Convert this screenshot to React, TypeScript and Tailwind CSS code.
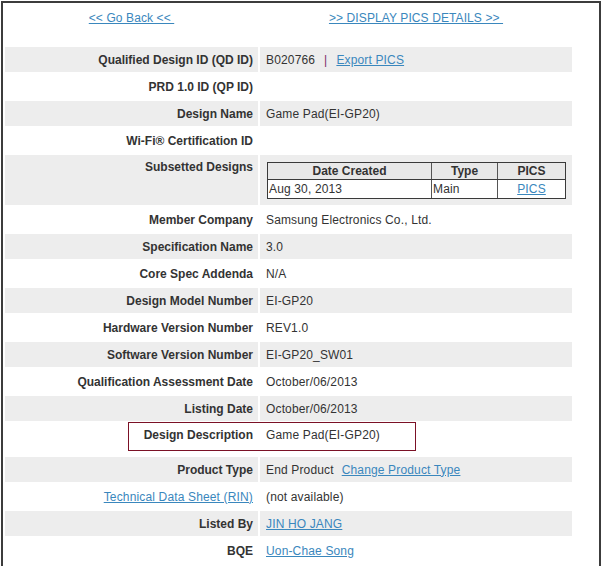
import type { ReactNode } from "react";

const linkCls = "text-[#3a87bd] underline underline-offset-[1px]";

type Row = {
  label: ReactNode;
  value?: ReactNode;
  gray: boolean;
  kind?: "subset" | "desc";
};

function SubsetTable() {
  return (
    <div className="w-[299px] border border-[#3a3a3a] bg-white text-[12px] leading-[14px] text-[#333]">
      <div className="grid h-[17px] grid-cols-[163px_66px_68px] border-b border-[#3a3a3a] bg-[#e8e8e8] font-bold">
        <div className="flex items-center justify-center">Date Created</div>
        <div className="flex items-center justify-center border-l border-[#555]">Type</div>
        <div className="flex items-center justify-center border-l border-[#555]">PICS</div>
      </div>
      <div className="grid h-[18px] grid-cols-[163px_66px_68px] tracking-[0.15px]">
        <div className="flex items-center pl-[1px]">Aug 30, 2013</div>
        <div className="flex items-center border-l border-[#555] pl-[1px]">Main</div>
        <div className="flex items-center justify-center border-l border-[#555]">
          <a className={linkCls}>PICS</a>
        </div>
      </div>
    </div>
  );
}

export default function App() {
  const rows: Row[] = [
    {
      label: "Qualified Design ID (QD ID)",
      value: (
        <>
          B020766
          <span className="mx-[9px] text-[#7b2d6b]">|</span>
          <a className={linkCls}>Export PICS</a>
        </>
      ),
      gray: true,
    },
    { label: "PRD 1.0 ID (QP ID)", gray: false },
    { label: "Design Name", value: "Game Pad(EI-GP20)", gray: true },
    { label: "Wi-Fi® Certification ID", gray: false },
    { label: "Subsetted Designs", gray: true, kind: "subset" },
    { label: "Member Company", value: "Samsung Electronics Co., Ltd.", gray: false },
    { label: "Specification Name", value: "3.0", gray: true },
    { label: "Core Spec Addenda", value: "N/A", gray: false },
    { label: "Design Model Number", value: "EI-GP20", gray: true },
    { label: "Hardware Version Number", value: "REV1.0", gray: false },
    { label: "Software Version Number", value: "EI-GP20_SW01", gray: true },
    { label: "Qualification Assessment Date", value: "October/06/2013", gray: false },
    { label: "Listing Date", value: "October/06/2013", gray: true },
    { label: "Design Description", value: "Game Pad(EI-GP20)", gray: false, kind: "desc" },
    {
      label: "Product Type",
      value: (
        <>
          End Product
          <a className={`${linkCls} ml-[8px]`}>Change Product Type</a>
        </>
      ),
      gray: true,
    },
    {
      label: (
        <a className={`${linkCls} font-normal tracking-[0.15px]`}>Technical Data Sheet (RIN)</a>
      ),
      value: "(not available)",
      gray: false,
    },
    { label: "Listed By", value: <a className={linkCls}>JIN HO JANG</a>, gray: true },
    { label: "BQE", value: <a className={linkCls}>Uon-Chae Song</a>, gray: false },
  ];

  return (
    <div
      className="relative h-[566px] w-[604px] overflow-hidden bg-white text-[12px] leading-[14px] text-[#333]"
      style={{ fontFamily: '"Liberation Sans", Arial, sans-serif' }}
    >
      <div className="ml-[1px] mt-[1px] h-[600px] w-[600px] border-l-2 border-r-2 border-t-2 border-[#3c3c3c]">
        <div className="flex h-[42px] gap-[2px] pl-[2px] tracking-[0.1px]">
          <div className="flex w-[253px] justify-center pt-[8px]">
            <a className={linkCls}>&lt;&lt; Go Back &lt;&lt;&nbsp;</a>
          </div>
          <div className="flex w-[312px] justify-center pt-[8px]">
            <a className={linkCls}>&gt;&gt; DISPLAY PICS DETAILS &gt;&gt;&nbsp;</a>
          </div>
        </div>

        <div className="mt-[2px] grid w-[569px] grid-cols-[253px_312px] gap-[2px] pl-[2px]">
          {rows.map((row, i) => {
            const bg = row.gray ? "bg-[#ededed]" : "bg-white";
            if (row.kind === "subset") {
              return [
                <div
                  key={`l${i}`}
                  className={`flex h-[50px] justify-end pr-[5px] pt-[5px] font-bold ${bg}`}
                >
                  {row.label}
                </div>,
                <div key={`v${i}`} className={`h-[50px] pl-[7px] pt-[7px] ${bg}`}>
                  <SubsetTable />
                </div>,
              ];
            }
            const h = row.kind === "desc" ? "h-[32px] items-start pt-[5px]" : "h-[25px] items-center";
            return [
              <div
                key={`l${i}`}
                className={`flex justify-end pr-[5px] font-bold ${h} ${bg}`}
              >
                {row.label}
              </div>,
              <div key={`v${i}`} className={`flex pl-[6px] tracking-[0.15px] ${h} ${bg}`}>
                {row.value}
              </div>,
            ];
          })}
        </div>
      </div>

      {/* highlight annotation */}
      <div className="pointer-events-none absolute left-[128px] top-[422px] h-[29px] w-[288px] border border-[#7b1126]" />
    </div>
  );
}
